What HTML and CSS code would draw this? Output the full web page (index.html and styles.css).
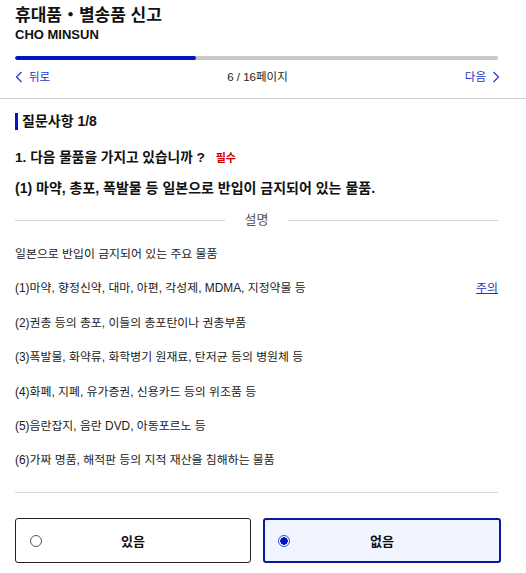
FILE: index.html
```html
<!DOCTYPE html>
<html lang="ko">
<head>
<meta charset="utf-8">
<title>휴대품・별송품 신고</title>
<link rel="stylesheet" href="styles.css">
</head>
<body>
<header class="header">
  <h1 class="title">휴대품・별송품 신고</h1>
  <div class="name">CHO MINSUN</div>
  <div class="progress"><div class="progress-fill" style="width:37.5%"></div></div>
  <nav class="pager">
    <a class="pager-link" href="#"><svg class="chev" width="8" height="12" viewBox="0 0 8 12"><path d="M6.5 1 L1.5 6 L6.5 11" fill="none" stroke="currentColor" stroke-width="1.2"/></svg>뒤로</a>
    <span class="pager-count">6 / 16페이지</span>
    <a class="pager-link pager-next" href="#">다음<svg class="chev chev-right" width="8" height="12" viewBox="0 0 8 12"><path d="M1.5 1 L6.5 6 L1.5 11" fill="none" stroke="currentColor" stroke-width="1.2"/></svg></a>
  </nav>
</header>
<main class="main">
  <h2 class="section-title">질문사항 1/8</h2>
  <p class="question">1. 다음 물품을 가지고 있습니까 ? <span class="required">필수</span></p>
  <p class="subq">(1) 마약, 총포, 폭발물 등 일본으로 반입이 금지되어 있는 물품.</p>
  <div class="divider"><span>설명</span></div>
  <ul class="list">
    <li>일본으로 반입이 금지되어 있는 주요 물품</li>
    <li class="with-link"><span>(1)마약, 향정신약, 대마, 아편, 각성제, MDMA, 지정약물 등</span><a href="#" class="note-link">주의</a></li>
    <li>(2)권총 등의 총포, 이들의 총포탄이나 권총부품</li>
    <li>(3)폭발물, 화약류, 화학병기 원재료, 탄저균 등의 병원체 등</li>
    <li>(4)화폐, 지폐, 유가증권, 신용카드 등의 위조품 등</li>
    <li>(5)음란잡지, 음란 DVD, 아동포르노 등</li>
    <li>(6)가짜 명품, 해적판 등의 지적 재산을 침해하는 물품</li>
  </ul>
  <hr class="rule">
  <div class="choices">
    <label class="choice"><span class="radio"></span><span class="choice-text">있음</span></label>
    <label class="choice choice-selected"><span class="radio radio-on"></span><span class="choice-text">없음</span></label>
  </div>
</main>
</body>
</html>
```

FILE: styles.css
```css
* { box-sizing: border-box; }
html, body { margin: 0; padding: 0; background: #fff; }
body {
  font-family: "Liberation Sans", "Noto Sans CJK KR", sans-serif;
  color: #111;
  width: 526px;
}
.header {
  padding: 6px 28px 11px 15px;
  border-bottom: 1px solid #cfcfcf;
}
.title {
  margin: 0;
  font-size: 17px;
  line-height: 20px;
  font-weight: 700;
}
.name {
  font-size: 13px;
  font-weight: 700;
  line-height: 18px;
}
.progress {
  margin-top: 12px;
  height: 4px;
  border-radius: 2px;
  background: #c8c8c8;
  overflow: hidden;
}
.progress-fill {
  height: 100%;
  background: #0016c0;
  border-radius: 2px;
}
.pager {
  margin-top: 7px;
  display: flex;
  justify-content: space-between;
  align-items: center;
  font-size: 11.5px;
  line-height: 20px;
}
.pager-link {
  color: #2236c8;
  text-decoration: none;
  display: flex;
  align-items: center;
  gap: 6px;
}
.pager-next { margin-right: -2px; }
.chev { display: block; }
.pager-count { color: #222; }
.main {
  padding: 14px 28px 0 15px;
}
.section-title {
  margin: 0;
  border-left: 3px solid #0016c0;
  padding-left: 4px;
  font-size: 14px;
  font-weight: 700;
  line-height: 17px;
}
.question {
  margin: 18px 0 0;
  font-size: 13.7px;
  font-weight: 700;
  line-height: 20px;
}
.required {
  color: #d40000;
  font-size: 11px;
  margin-left: 7px;
}
.subq {
  margin: 10px 0 0;
  font-size: 14px;
  font-weight: 700;
  line-height: 20px;
}
.divider {
  margin-top: 12px;
  display: flex;
  align-items: center;
  gap: 20px;
  font-size: 13px;
  line-height: 20px;
  color: #555;
}
.divider::before, .divider::after {
  content: "";
  flex: 1;
  height: 1px;
  background: #d4d4d4;
}
.list {
  list-style: none;
  margin: 14px 0 0;
  padding: 0;
  display: flex;
  flex-direction: column;
  gap: 14.4px;
  font-size: 11.9px;
  line-height: 20px;
  color: #222;
}
.with-link {
  display: flex;
  justify-content: space-between;
}
.note-link {
  color: #1a35c8;
  text-decoration: underline;
}
.rule {
  margin: 22px 0 0;
  border: 0;
  height: 1px;
  background: #d8d8d8;
}
.choices {
  margin-top: 25px;
  margin-right: -3px;
  display: grid;
  grid-template-columns: 236px 1fr;
  gap: 12px;
}
.choice {
  height: 45px;
  border: 1px solid #222;
  border-radius: 3px;
  display: flex;
  align-items: center;
  position: relative;
  font-size: 13px;
  font-weight: 700;
}
.choice-selected {
  border: 2px solid #0a1a9a;
  background: #f0f5ff;
}
.radio {
  position: absolute;
  left: 14px;
  width: 12px;
  height: 12px;
  border: 1px solid #555;
  border-radius: 50%;
  background: #fff;
}
.choice-selected .radio { left: 13px; }
.radio-on {
  border: 1.5px solid #2a4be0;
  background: radial-gradient(circle, #0016c0 0 3.5px, #fff 4px);
}
.choice-text {
  flex: 1;
  text-align: center;
}
```
